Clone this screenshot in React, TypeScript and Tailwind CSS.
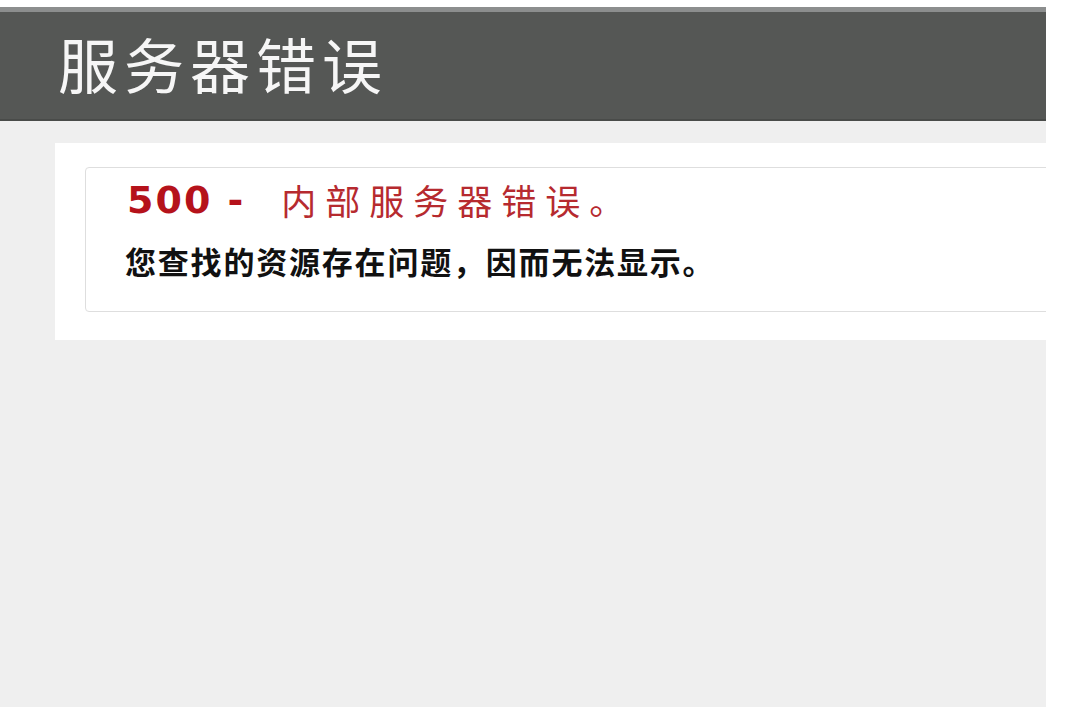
import React from 'react';

const cjk = "font-['Noto_Sans_CJK_SC','Noto_Sans_CJK_JP',sans-serif]";

const App: React.FC = () => {
  return (
    <div className="w-[1067px] h-[710px] bg-white overflow-hidden">
      <div className="mt-[7px] w-[1046px] h-[700px] bg-[#efefef] overflow-hidden">
        {/* Header */}
        <div className="h-[114px] bg-[#555755] border-t-[5px] border-t-[#8c8e8e] border-b-2 border-b-[#494b49] pl-[58px] pt-[21px]">
          <h1 className={`${cjk} text-[60px] leading-none tracking-[6px] text-[#f6f6f6] font-normal`}>
            服务器错误
          </h1>
        </div>

        {/* Content */}
        <div className="pl-[55px] pt-[22px]">
          <div className="w-[1100px] bg-white pl-[30px] pt-[24px] pb-[28px]">
            <div className="h-[145px] border border-[#dedede] rounded-[4px] pl-[39px] pt-[10px]">
              <h2 className="h-[44px] flex items-center text-[#b5121b]">
                <span className="font-['DejaVu_Sans',sans-serif] font-bold text-[38px] tracking-[2px] ml-[2px]">500 -</span>
                <span className={`${cjk} text-[35px] tracking-[9px] ml-[36px] text-[#b62a2f]`}>内部服务器错误。</span>
              </h2>
              <p className={`${cjk} mt-[21px] text-[31px] leading-[36px] font-bold tracking-[1.8px] text-[#111]`}>
                您查找的资源存在问题，因而无法显示。
              </p>
            </div>
          </div>
        </div>
      </div>
    </div>
  );
};

export default App;
